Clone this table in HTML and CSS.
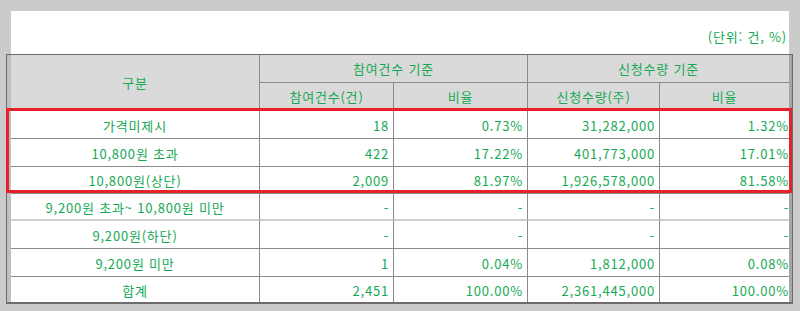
FILE: index.html
```html
<!DOCTYPE html>
<html lang="ko">
<head>
<meta charset="utf-8">
<link rel="stylesheet" href="styles.css">
</head>
<body>
<div class="page">
  <div class="sheet">
    <div class="unit">(단위: 건, %)</div>
  </div>
  <div class="frame">
    <div class="inner">
      <table class="grid">
        <colgroup>
          <col class="c1"><col class="c2"><col class="c3"><col class="c4"><col class="c5">
        </colgroup>
        <thead>
          <tr class="h1">
            <th rowspan="2">구분</th>
            <th colspan="2">참여건수 기준</th>
            <th colspan="2" class="last">신청수량 기준</th>
          </tr>
          <tr class="h2">
            <th>참여건수(건)</th>
            <th>비율</th>
            <th>신청수량(주)</th>
            <th class="last">비율</th>
          </tr>
        </thead>
        <tbody>
          <tr class="r28"><td class="label">가격미제시</td><td>18</td><td>0.73%</td><td>31,282,000</td><td class="last">1.32%</td></tr>
          <tr class="r28"><td class="label">10,800원 초과</td><td>422</td><td>17.22%</td><td>401,773,000</td><td class="last">17.01%</td></tr>
          <tr class="r27"><td class="label">10,800원(상단)</td><td>2,009</td><td>81.97%</td><td>1,926,578,000</td><td class="last">81.58%</td></tr>
          <tr class="r27 soft"><td class="label">9,200원 초과~ 10,800원 미만</td><td>-</td><td>-</td><td>-</td><td class="last">-</td></tr>
          <tr class="r28"><td class="label">9,200원(하단)</td><td>-</td><td>-</td><td>-</td><td class="last">-</td></tr>
          <tr class="r28"><td class="label">9,200원 미만</td><td>1</td><td>0.04%</td><td>1,812,000</td><td class="last">0.08%</td></tr>
          <tr class="r25 end"><td class="label">합계</td><td>2,451</td><td>100.00%</td><td>2,361,445,000</td><td class="last">100.00%</td></tr>
        </tbody>
      </table>
    </div>
    <div class="highlight"></div>
  </div>
</div>
</body>
</html>
```

FILE: styles.css
```css
html, body {
  margin: 0;
  padding: 0;
  background: #cbcbcb;
}

body {
  width: 800px;
  height: 311px;
  overflow: hidden;
  font-family: "Noto Sans CJK KR", "Noto Sans", sans-serif;
  font-size: 13px;
  letter-spacing: 0.8px;
  color: #16a955;
}

.page {
  padding-top: 11px;
}

.sheet {
  margin-left: 11px;
  width: 778px;
  height: 43px;
  background: #ffffff;
}

.unit {
  box-sizing: border-box;
  height: 43px;
  padding-top: 16px;
  padding-right: 2px;
  line-height: 20px;
  text-align: right;
}

.frame {
  position: relative;
  margin-left: 6px;
  width: 785px;
  border: 1px solid #6c6c6c;
  border-bottom-width: 2px;
}

.inner {
  border-left: 4px solid #c0c0c0;
  border-right: 3px solid #a6a6a6;
  background: #ffffff;
}

.grid {
  width: 778px;
  table-layout: fixed;
  border-collapse: separate;
  border-spacing: 0;
}

.c1 { width: 249px; }
.c2 { width: 134px; }
.c3 { width: 134px; }
.c4 { width: 132px; }
.c5 { width: 129px; }

.grid th,
.grid td {
  box-sizing: border-box;
  padding: 0 4px 0 0;
  border-right: 1px solid #8a8a8a;
  border-bottom: 1px solid #8a8a8a;
  font-weight: normal;
  white-space: nowrap;
  line-height: 16px;
}

.grid th {
  background: #dadada;
  text-align: center;
  padding: 0;
}

.grid .h1 th { height: 28px; }
.grid .h2 th { height: 28px; }

.grid td {
  text-align: right;
  padding-top: 2px;
}

.grid td.label {
  text-align: center;
  padding-right: 0;
}

.grid .last {
  border-right: none;
}

.grid td.last {
  padding-right: 0;
}

.r28 td { height: 28px; }
.r27 td { height: 27px; }
.r25 td { height: 25px; }

.soft td {
  border-bottom: 2px solid #cfcfcf;
}

.end td {
  border-bottom: none;
}

.highlight {
  position: absolute;
  left: -1px;
  top: 53px;
  width: 786px;
  height: 85px;
  box-sizing: border-box;
  border: 3px solid #e8202a;
  pointer-events: none;
}
```
